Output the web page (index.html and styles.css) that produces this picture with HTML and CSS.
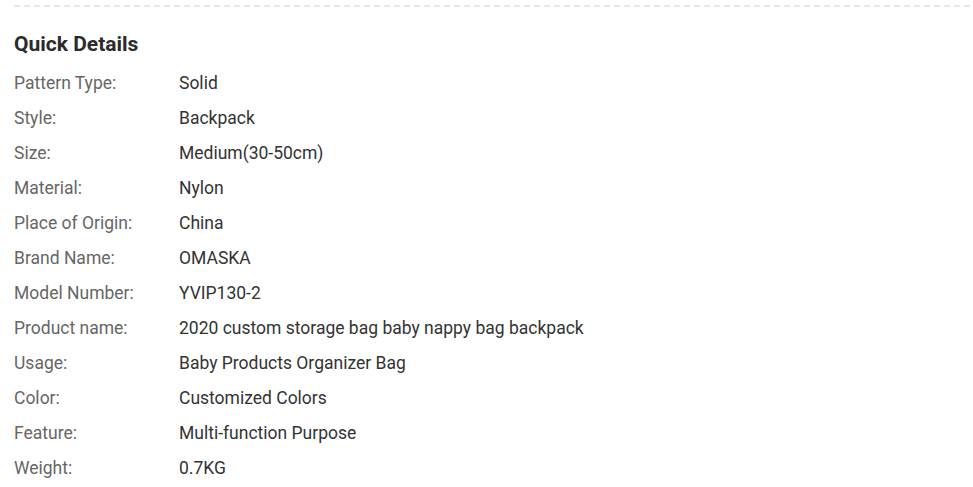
FILE: index.html
```html
<!DOCTYPE html>
<html>
<head>
<meta charset="utf-8">
<link rel="stylesheet" href="styles.css">
</head>
<body>
<div class="section">
  <div class="divider"></div>
  <h2 class="title">Quick Details</h2>
  <dl class="details">
    <div class="row"><dt>Pattern Type:</dt><dd>Solid</dd></div>
    <div class="row"><dt>Style:</dt><dd>Backpack</dd></div>
    <div class="row"><dt>Size:</dt><dd>Medium(30-50cm)</dd></div>
    <div class="row"><dt>Material:</dt><dd>Nylon</dd></div>
    <div class="row"><dt>Place of Origin:</dt><dd>China</dd></div>
    <div class="row"><dt>Brand Name:</dt><dd>OMASKA</dd></div>
    <div class="row"><dt>Model Number:</dt><dd>YVIP130-2</dd></div>
    <div class="row"><dt>Product name:</dt><dd>2020 custom storage bag baby nappy bag backpack</dd></div>
    <div class="row"><dt>Usage:</dt><dd>Baby Products Organizer Bag</dd></div>
    <div class="row"><dt>Color:</dt><dd>Customized Colors</dd></div>
    <div class="row"><dt>Feature:</dt><dd>Multi-function Purpose</dd></div>
    <div class="row"><dt>Weight:</dt><dd>0.7KG</dd></div>
  </dl>
</div>
</body>
</html>
```
FILE: styles.css
```css
html, body {
  margin: 0;
  padding: 0;
  background: #fff;
}
body {
  font-family: Roboto, "Liberation Sans", Arial, sans-serif;
}
.section {
  padding: 5px 0 0 14px;
}
.divider {
  height: 2px;
  background: repeating-linear-gradient(to right, #e6e6ec 0 6px, transparent 6px 10px);
}
.title {
  margin: 25px 0 0 0;
  font-size: 21px;
  line-height: 24px;
  font-weight: 700;
  color: #2b2b2b;
}
.details {
  margin: 9px 0 0 0;
  padding: 0;
}
.row {
  display: flex;
  height: 35px;
  align-items: center;
  font-size: 17.5px;
  line-height: 20px;
}
.row dt {
  width: 165px;
  flex: none;
  color: #666;
}
.row dd {
  margin: 0;
  color: #333;
}
```
